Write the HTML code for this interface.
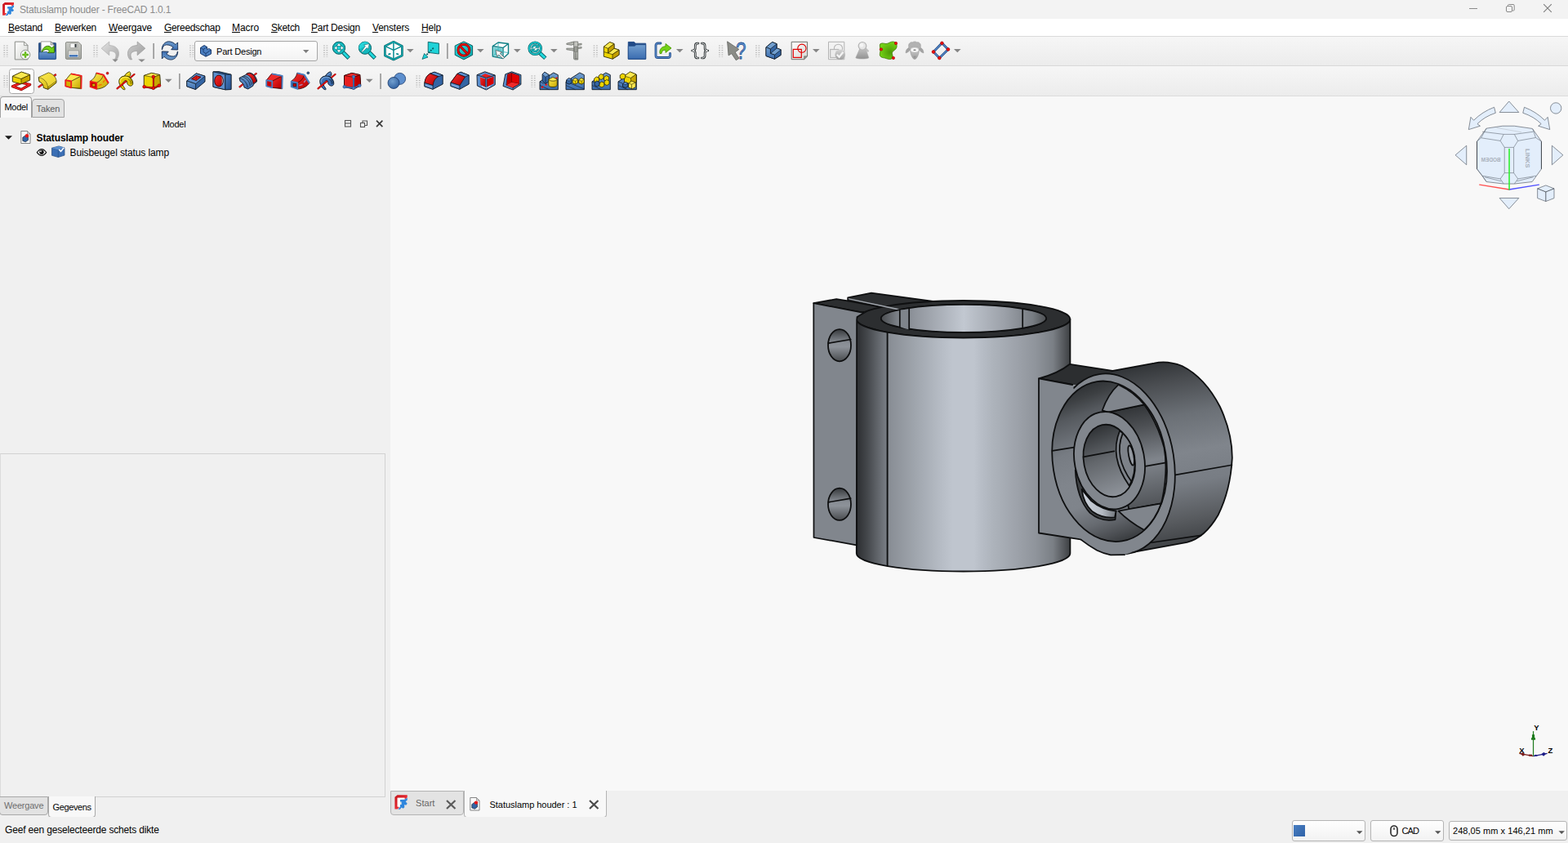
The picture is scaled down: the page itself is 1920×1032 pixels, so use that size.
<!DOCTYPE html>
<html lang="nl">
<head>
<meta charset="utf-8">
<title>Statuslamp houder - FreeCAD 1.0.1</title>
<style>
*{box-sizing:border-box;margin:0;padding:0}
html,body{width:1920px;height:1032px;overflow:hidden;background:#f0f0f0;font-family:"Liberation Sans","DejaVu Sans",sans-serif;font-size:12px;color:#000}
.abs{position:absolute}
#titlebar{position:absolute;left:0;top:0;width:1920px;height:23px;background:#f3f3f3}
#title{position:absolute;left:24px;top:5px;font-size:12px;color:#8b8b8b;white-space:nowrap;line-height:15px;letter-spacing:-0.19px}
#menubar{position:absolute;left:0;top:23px;width:1920px;height:21px;background:#fff}
.mi{position:absolute;top:4px;line-height:14px;font-size:12px;white-space:nowrap;color:#000;letter-spacing:-0.25px}
.mi u{text-decoration:underline;text-underline-offset:1px}
#tb1{position:absolute;left:0;top:44px;width:1920px;height:37px;background:linear-gradient(#f6f6f6,#ececec);border-top:1px solid #dadada;border-bottom:1px solid #d8d8d8}
#tb2{position:absolute;left:0;top:81px;width:1920px;height:37px;background:linear-gradient(#f6f6f6,#ececec);border-bottom:1px solid #dcdcdc}
#left{position:absolute;left:0;top:118px;width:478px;height:882px;background:#f0f0f0}
#view{position:absolute;left:478px;top:118px;width:1442px;height:850px;background:#f8f8f8;overflow:hidden}
#viewtabs{position:absolute;left:478px;top:968px;width:1442px;height:32px;background:#f0f0f0}
#status{position:absolute;left:0;top:1000px;width:1920px;height:32px;background:#f0f0f0}
#status .msg{position:absolute;left:6px;top:9px;font-size:12px;line-height:14px;white-space:nowrap;letter-spacing:-0.173px}
#combo{position:absolute;left:238px;top:50px;width:151px;height:25px;border:1px solid #a6a6a6;border-radius:3px;background:linear-gradient(#fefefe,#f3f3f3)}
#combo span{position:absolute;left:26px;top:5px;font-size:11px;line-height:14px;letter-spacing:-0.2px;white-space:nowrap}
</style>
</head>
<body>
<svg width="0" height="0" style="position:absolute">
<defs>
<linearGradient id="gY" x1="0" y1="0" x2="1" y2="1"><stop offset="0" stop-color="#fce94f"/><stop offset="1" stop-color="#c9a800"/></linearGradient>
<linearGradient id="gYv" x1="0" y1="0" x2="0" y2="1"><stop offset="0" stop-color="#fce94f"/><stop offset="1" stop-color="#d4b200"/></linearGradient>
<linearGradient id="gB" x1="0" y1="0" x2="0" y2="1"><stop offset="0" stop-color="#729fcf"/><stop offset="1" stop-color="#3a6cb0"/></linearGradient>
<linearGradient id="gBd" x1="0" y1="0" x2="1" y2="1"><stop offset="0" stop-color="#4a7fc1"/><stop offset="1" stop-color="#25508f"/></linearGradient>
<linearGradient id="gR" x1="0" y1="0" x2="1" y2="1"><stop offset="0" stop-color="#f22c2c"/><stop offset="1" stop-color="#b80000"/></linearGradient>
<linearGradient id="gT" x1="0" y1="0" x2="1" y2="1"><stop offset="0" stop-color="#2fe2e6"/><stop offset="1" stop-color="#0aa3a8"/></linearGradient>
<linearGradient id="gPage" x1="0" y1="0" x2="1" y2="1"><stop offset="0" stop-color="#ffffff"/><stop offset="1" stop-color="#d6d7d3"/></linearGradient>
<linearGradient id="gGrey" x1="0" y1="0" x2="0" y2="1"><stop offset="0" stop-color="#c9cac5"/><stop offset="1" stop-color="#a3a59f"/></linearGradient>
<linearGradient id="gUndo" x1="0" y1="0" x2="1" y2="1"><stop offset="0" stop-color="#e4e4e4"/><stop offset="1" stop-color="#a8a8a8"/></linearGradient>
<linearGradient id="gRedo" x1="1" y1="0" x2="0" y2="1"><stop offset="0" stop-color="#cfcfcf"/><stop offset="1" stop-color="#9a9a9a"/></linearGradient>
<linearGradient id="gDis" x1="0" y1="0" x2="0" y2="1"><stop offset="0" stop-color="#d6d6d6"/><stop offset="1" stop-color="#9c9c9c"/></linearGradient>
<linearGradient id="gDis2" x1="0" y1="0" x2="0" y2="1"><stop offset="0" stop-color="#c6c6c6"/><stop offset="1" stop-color="#929292"/></linearGradient>
<radialGradient id="gGreen" cx=".6" cy=".6" r=".6"><stop offset="0" stop-color="#4e9a06"/><stop offset="1" stop-color="#73d216"/></radialGradient>
<radialGradient id="gSph" cx=".4" cy=".35" r=".7"><stop offset="0" stop-color="#729fcf"/><stop offset="1" stop-color="#2f5f9f"/></radialGradient>
<linearGradient id="gLogo" x1="0" y1="0" x2="1" y2="1"><stop offset="0" stop-color="#c4141b"/><stop offset=".45" stop-color="#e0262d"/><stop offset="1" stop-color="#ff5f64"/></linearGradient>
</defs>
</svg>
<div id="titlebar">
  <svg class="abs" style="left:0;top:0" width="24" height="24" viewBox="0 0 768 768"><path d="M100 170L190 95H545V185L450 258V195H195V510L268 515 200 600H100z" fill="url(#gLogo)"/><path d="M195 195H450V258H290V520L195 512z" fill="#fff"/><path d="M290 262L450 256 545 190V275L485 330 545 400 500 455 440 440 445 530 400 575 335 540 290 605H215L290 515V440H340V335H290z" fill="#2f86dd"/></svg>
  <div id="title">Statuslamp houder - FreeCAD 1.0.1</div>
  <svg class="abs" style="left:1780px;top:0" width="140" height="23" viewBox="1780 0 140 23"><path d="M1799 10.5h10" stroke="#8a8a8a" stroke-width="1"/><rect x="1844.5" y="7.5" width="7" height="7" rx="1.5" fill="none" stroke="#8a8a8a"/><path d="M1846.5 7.5v-1a1 1 0 0 1 1-1h5.5a1.2 1.2 0 0 1 1.2 1.2v5.3a1 1 0 0 1-1 1h-1" fill="none" stroke="#8a8a8a"/><path d="M1890.200 5.200l9.600 9.600M1899.800 5.200l-9.600 9.600" stroke="#7c7c7c" stroke-width="1.100"/></svg>
</div>
<div id="menubar">
  <span class="mi" style="left:10px;letter-spacing:-0.29px"><u>B</u>estand</span>
  <span class="mi" style="left:67px;letter-spacing:-0.3px"><u>B</u>ewerken</span>
  <span class="mi" style="left:133px;letter-spacing:-0.19px"><u>W</u>eergave</span>
  <span class="mi" style="left:201px;letter-spacing:-0.32px"><u>G</u>ereedschap</span>
  <span class="mi" style="left:284px;letter-spacing:-0.07px"><u>M</u>acro</span>
  <span class="mi" style="left:332px;letter-spacing:-0.28px"><u>S</u>ketch</span>
  <span class="mi" style="left:381px;letter-spacing:-0.25px"><u>P</u>art Design</span>
  <span class="mi" style="left:456px;letter-spacing:-0.21px"><u>V</u>ensters</span>
  <span class="mi" style="left:516px;letter-spacing:-0.17px"><u>H</u>elp</span>
</div>
<div id="tb1"></div>
<div id="tb2"></div>
<div id="combo"><svg class="abs" style="left:5px;top:3px" width="16" height="16" viewBox="0 0 16 16"><path d="M1.5 4.5L6 1.5l3.5 2v3.2l2.2-1.3L14.5 7v5L8 15.2 1.5 11.5z" fill="#4a7fc1" stroke="#1b3a6b" stroke-width="1"/><path d="M1.5 4.5L5 6.5v3.2l3 1.8v3.7M5 6.5l4.5-3M8 11.5l6.5-4.5" fill="none" stroke="#1b3a6b" stroke-width=".9"/></svg><span>Part Design</span><svg class="abs" style="left:132px;top:9.5px" width="8" height="5" viewBox="0 0 8 5"><path d="M0 0h7.4L3.7 4z" fill="#7d7d7d"/></svg></div>
<svg class="abs" style="left:0;top:44px" width="1920" height="74" viewBox="0 44 1920 74" font-family="Liberation Sans, sans-serif">
<!-- grips tb1 -->
<path d="M5.3 55.400V70M8.7 55.400V70M115.3 55.400V70M118.7 55.400V70M233 55.400V70M236.4 55.400V70M397 55.400V70M400.4 55.400V70M727.5 55.400V70M730.9 55.400V70M881 55.400V70M884.4 55.400V70M926 55.400V70M929.4 55.400V70M5.3 92.400V107M8.7 92.400V107M510.3 92.400V107M513.7 92.400V107M651.3 92.400V107M654.7 92.400V107" stroke="#b0b0b0" stroke-width="1.700" stroke-dasharray="1 1.800" fill="none"/>
<!-- separators -->
<g fill="#9b9b9b"><rect x="187.3" y="53" width="1.7" height="19"/><rect x="547" y="53" width="1.7" height="19"/><rect x="219" y="90" width="1.7" height="19"/><rect x="465.2" y="90" width="1.7" height="19"/></g>
<!-- dropdown arrows -->
<g fill="#858585">
<path d="M498 60h8.6l-4.3 4.3z"/><path d="M584 60h8.6l-4.3 4.3z"/><path d="M629 60h8.6l-4.3 4.3z"/><path d="M674 60h8.6l-4.3 4.3z"/><path d="M828 60h8.6l-4.3 4.3z"/><path d="M995 60h8.6l-4.3 4.3z"/><path d="M1168 60h8.6l-4.3 4.3z"/>
<path d="M202 96.7h8.6l-4.3 4.3z"/><path d="M448 96.7h8.6l-4.3 4.3z"/>
</g>
<!-- New -->
<g transform="translate(16,50)"><path d="M2.3 1.1h11.2l4.5 4.5v17.3H2.3z" fill="url(#gPage)" stroke="#888a85"/><path d="M13.5 1.1v4.5h4.5z" fill="#f4f4f2" stroke="#888a85" stroke-width=".8" stroke-linejoin="round"/><circle cx="15.1" cy="17" r="5.7" fill="#fdfdfd" stroke="#888a85" stroke-width=".9"/><path d="M15.1 13.2v7.6M11.3 17h7.6" stroke="#4e9a06" stroke-width="2.3"/><path d="M15.1 13.8v6.4M11.9 17h6.4" stroke="#8ae234" stroke-width=".9"/></g>
<!-- Open -->
<g transform="translate(46,50)"><path d="M2.400 2.400H21.600a1 1 0 0 1 1 1V21.600a1 1 0 0 1-1 1H2.400a1 1 0 0 1-1-1V3.400a1 1 0 0 1 1-1z" fill="#204a87" stroke="#1a3a6a" stroke-width=".6"/><path d="M4.200.900h12l3.900 3.950V16H4.200z" fill="#fdfdfd" stroke="#8a8c88" stroke-width=".8"/><path d="M16.200.900v3.950h3.900z" fill="#e4e4e2" stroke="#6f716d" stroke-width=".7" stroke-linejoin="round"/><path d="M1.600 13.900L11.500 13.300 12.700 15 20 14.800 22.400 11.800V21.600a.8.800 0 0 1-.8.800H2.400a.8.800 0 0 1-.8-.8z" fill="url(#gB)" stroke="#204a87" stroke-width=".7" stroke-linejoin="round"/><path d="M5.100 13.600C6 9.500 9 6.400 12.700 6.300 14.600 6.400 16 7.400 17.300 8.600L20.300 6.600 20.500 14.400 12.400 14.400 14.400 12.400C13.200 11 11.600 10.300 10.100 10.400 8.200 10.800 6.800 12 5.700 13.600z" fill="#73d216" stroke="#2f6a04" stroke-width=".9" stroke-linejoin="round"/></g>
<!-- Save -->
<g transform="translate(78,50)"><path d="M3.8 1.6h14.3l3.4 3.4v16a1.4 1.4 0 0 1-1.4 1.4H3.8a1.4 1.4 0 0 1-1.4-1.4V3a1.4 1.4 0 0 1 1.4-1.4z" fill="url(#gGrey)" stroke="#888a85"/><rect x="8" y="3.1" width="8.8" height="5.6" rx=".9" fill="#fbfbfb" stroke="#888a85" stroke-width=".7"/><rect x="13.5" y="3.9" width="2.1" height="4" fill="#2e3436"/><rect x="5.8" y="12" width="12.5" height="8.4" fill="#eeeeec" stroke="#888a85" stroke-width=".7"/><path d="M6.5 14h11M6.5 15.7h11" stroke="#bcbcb8" stroke-width=".8"/><rect x="6.8" y="17.1" width="10.5" height="2.5" fill="#3f73b8"/></g>
<!-- Undo -->
<g transform="translate(123,50)"><path d="M1.2 9.2L10.8 1v4.6c7 0 11.7 4 11.7 10 0 3-1 5.4-2.6 7.2h-2.6c1.200-1.800 1.700-3.400 1.700-5 0-3.600-3-5.400-8.200-5.400v5.300z" fill="url(#gUndo)" stroke="#b4b4b4" stroke-width=".8" stroke-linejoin="round"/><path d="M14.4 22.4h7.300l-3.650 3.600z" fill="#8a8a8a"/></g>
<!-- Redo -->
<g transform="translate(155,50)"><path transform="translate(24,0) scale(-1,1)" d="M1.2 9.2L10.8 1v4.6c7 0 11.7 4 11.7 10 0 3-1 5.400-2.600 7.200h-2.600c1.200-1.800 1.700-3.400 1.700-5 0-3.600-3-5.400-8.200-5.400v5.300z" fill="url(#gRedo)" stroke="#a0a0a0" stroke-width=".8" stroke-linejoin="round"/><path d="M14.200 22.400h8.600l-4.300 3.700z" fill="#8a8a8a"/></g>
<!-- Refresh -->
<g transform="translate(195,50)"><path d="M3.250 10.700C3.300 5 7 1 11.500.800 15 .800 17.800 2.400 20 4.600L22.600 1.900 22.700 10.950 14.700 10.700 17.100 8C15 6 12 4.850 8.600 4.850 5.800 5.200 4 7.500 3.700 10.600z" fill="url(#gB)" stroke="#13294d" stroke-width=".9" stroke-linejoin="round"/><path transform="rotate(180 12.980 11.950)" d="M3.250 10.700C3.300 5 7 1 11.500.800 15 .800 17.800 2.400 20 4.600L22.600 1.900 22.700 10.950 14.700 10.700 17.100 8C15 6 12 4.850 8.600 4.850 5.800 5.200 4 7.500 3.700 10.600z" fill="url(#gB)" stroke="#13294d" stroke-width=".9" stroke-linejoin="round"/></g>
<!-- ZoomFit -->
<g transform="translate(405,50)"><path d="M15 14l7.200 7.200" stroke="#0b5f63" stroke-width="4.800"/><path d="M14.500 13.500l7.200 7.200" stroke="#22d9de" stroke-width="3"/><circle cx="10" cy="8.700" r="7.600" fill="#13b9bf" stroke="#0b5f63"/><path d="M10 2.800l2.900 3.700H7.100zM10 14.600l2.900-3.700H7.100zM4.100 8.700l3.700-2.900v5.800zM15.900 8.700l-3.700-2.900v5.800z" fill="#fff" stroke="#0b5f63" stroke-width=".5"/><rect x="8.200" y="6.900" width="3.600" height="3.600" fill="#25dbe0" stroke="#0b8f94" stroke-width=".5"/></g>
<!-- ZoomSel -->
<g transform="translate(437,50)"><path d="M15 14l7.200 7.200" stroke="#0b5f63" stroke-width="4.800"/><path d="M14.500 13.500l7.200 7.200" stroke="#22d9de" stroke-width="3"/><circle cx="9.900" cy="8.700" r="7.600" fill="#13b9bf" stroke="#0b5f63"/><path d="M2.600 10.500A7.600 7.600 0 0 1 15.400 3.400z" fill="#2fe0e4" opacity=".7"/><path d="M5.600 13.100l1 1 5.600-5.600 1.700 1.700 1.300-6.600-6.600 1.300 1.700 1.700z" fill="#fff" stroke="#0b5f63" stroke-width=".6" stroke-linejoin="round"/></g>
<!-- Iso cube -->
<g transform="translate(470,50)"><path d="M11.900 1.200L22.400 6.400v11.600L11.900 23 1.400 18V6.400z" fill="#fff" stroke="#0b5f63" stroke-width="2.600" stroke-linejoin="round"/><path d="M11.900 1.200L22.400 6.400v11.600L11.900 23 1.400 18V6.400zM1.400 6.400l10.500 5 10.500-5M11.900 11.400V23M11.900 1.200v10" fill="none" stroke="#11a9af" stroke-width="1.400" stroke-linejoin="round"/><path d="M1.400 6.400l10.500 5 10.500-5M11.900 11.400V23M11.900 2v9" fill="none" stroke="#0b6a6f" stroke-width=".6"/><ellipse cx="6.900" cy="16.200" rx="1.800" ry="1" fill="#0b8d92" transform="rotate(-15 6.900 16.200)"/><ellipse cx="16.700" cy="16.200" rx="1.800" ry="1" fill="#0b8d92" transform="rotate(15 16.700 16.200)"/></g>
<!-- SelFit -->
<g transform="translate(516,50)"><path d="M8.200 1.300l13.200 1.800v12.900L8.200 14.300z" fill="#1fd3d8" stroke="#0b5f63" stroke-width=".9" stroke-linejoin="round"/><path d="M14.800 8.700L5.500 18" stroke="#0b5f63" stroke-width="1.800" stroke-dasharray="2 1.300"/><path d="M1 22.400l2.600-6.900 4.400 4.500z" fill="#1fd3d8" stroke="#0b5f63" stroke-width=".8" stroke-linejoin="round"/></g>
<!-- DrawStyle -->
<g transform="translate(555,50)"><path d="M12.900.9L23.600 6v11.300L12.900 22.900 2.200 17.300V6z" fill="url(#gT)" stroke="#0b5f63" stroke-linejoin="round"/><circle cx="12.900" cy="11.200" r="7" fill="none" stroke="#7a0000" stroke-width="3"/><circle cx="12.900" cy="11.200" r="7" fill="none" stroke="#e01010" stroke-width="2"/><path d="M8 6.300l9.800 9.800" stroke="#7a0000" stroke-width="3"/><path d="M8 6.300l9.800 9.800" stroke="#e01010" stroke-width="2"/></g>
<!-- SelBox -->
<g transform="translate(601,50)"><path d="M2.300 6.500L9 2l12.500 1.500v12L15 21.600 2.300 19z" fill="#fff" fill-opacity=".7" stroke="#0e7f85" stroke-width="1.400" stroke-linejoin="round"/><path d="M2.300 6.500L15 8.500v13M15 8.500l6.500-5" fill="none" stroke="#0e7f85" stroke-width="1.400"/><path d="M3.500 8l10.300 1.600v10.500L3.500 18z" fill="#3fbfc4" opacity=".8"/><path d="M9 2.500v10l-6 6M9 12.500l12 2" fill="none" stroke="#38b5ba" stroke-width=".9"/><path d="M6 11.500l1.800 8 1.800-2.600 5.400 5 1.500-1.500-5.300-5 2.800-1.400z" fill="#fff" stroke="#555" stroke-width=".7" stroke-linejoin="round"/></g>
<!-- ZoomRef -->
<g transform="translate(645,50)"><path d="M15.500 14.500l7.300 6.800" stroke="#0b5f63" stroke-width="4.800"/><path d="M15 14l7.300 6.800" stroke="#22d9de" stroke-width="3"/><circle cx="10.200" cy="9.200" r="7.300" fill="#eafafa" stroke="#0b5f63" stroke-width="3"/><circle cx="10.200" cy="9.200" r="7.300" fill="none" stroke="#19c4ca" stroke-width="1.800"/><path d="M5.500 8.500c.3-2.600 2.200-4.200 4.700-4.200 1.300 0 2.300.4 3.100 1.100l1.500-1.300v4.500h-4.500l1.500-1.500c-.5-.4-1-.6-1.700-.6-1.300 0-2.200.8-2.500 2z" fill="#12aeb4" stroke="#0b6a6f" stroke-width=".5"/><path transform="rotate(180 10.200 9.200)" d="M5.500 8.500c.3-2.600 2.200-4.200 4.700-4.200 1.300 0 2.300.4 3.100 1.100l1.500-1.300v4.500h-4.500l1.500-1.500c-.5-.4-1-.6-1.700-.6-1.300 0-2.200.8-2.500 2z" fill="#12aeb4" stroke="#0b6a6f" stroke-width=".5"/></g>
<!-- Measure -->
<g transform="translate(691,50)"><path d="M11.600 1h5.100v22h-4.200l-.9-1z" fill="url(#gGrey)" stroke="#6f716c" stroke-width=".8"/><path d="M2.800 3.200L11.600 1v3.300l-3 .9-5.800-.9zM2.800 9.200h8.800v3.100l-3-.7-5.800-.9z" fill="#b4b6b0" stroke="#6f716c" stroke-width=".8" stroke-linejoin="round"/><path d="M16.700 3.800l4.400-.6v1.700l-4.400.6zM16.700 8l4.400-.6v1.700l-4.400.6z" fill="#b4b6b0" stroke="#6f716c" stroke-width=".7"/><path d="M12.500 7h3.300v6.500h-3.300z" fill="#9b9d97" stroke="#6f716c" stroke-width=".6"/><path d="M13 15h1.600M13 16.700h1.600M13 18.400h1.600M13 20.100h1.600M13 21.600h2.600" stroke="#555" stroke-width=".6"/></g>
<!-- Part -->
<g transform="translate(735,50)"><path d="M4.300 7.200L11.600 1.600l5.400 2v5.600l6 2v6L15 22.200 4.300 19.200z" fill="#edd400" stroke="#302b00" stroke-width=".9" stroke-linejoin="round"/><path d="M4.300 7.200L11.600 1.600l5.400 2-7.300 5.700z" fill="#fce94f" stroke="#302b00" stroke-width=".7" stroke-linejoin="round"/><path d="M9.700 9.300V15l5.300 1.700 8-5.500-6-2-7.300 5.800" fill="#fce94f" stroke="#302b00" stroke-width=".7" stroke-linejoin="round"/><path d="M15 16.700v5.500l8-5v-6z" fill="#c4a000" stroke="#302b00" stroke-width=".7" stroke-linejoin="round"/><path d="M9.700 9.300l7.300-5.700v5.600L9.700 15z" fill="#c4a000" stroke="#302b00" stroke-width=".7" stroke-linejoin="round"/><path d="M4.300 13.500l5.400 1.500" stroke="#302b00" stroke-width=".7"/></g>
<!-- Group -->
<g transform="translate(768,50)"><path d="M1.300 1.400h7.200l1.500 1.800h12.700v19H1.300z" fill="#204a87" stroke="#204a87" stroke-linejoin="round"/><path d="M1.300 6.300h8l1.500-1.600h11.900v17.500H1.300z" fill="url(#gB)" stroke="#204a87" stroke-width=".8" stroke-linejoin="round"/></g>
<!-- Link -->
<g transform="translate(800,50)"><path d="M9 3H5.500A2.500 2.500 0 0 0 3 5.500v12.500A2.500 2.500 0 0 0 5.500 20.500h12.500a2.500 2.500 0 0 0 2.500-2.500V15.500" fill="none" stroke="#204a87" stroke-width="2.800" stroke-linecap="round"/><path d="M9 3H5.500A2.500 2.500 0 0 0 3 5.500v12.500A2.500 2.500 0 0 0 5.500 20.500h12.500a2.500 2.500 0 0 0 2.500-2.500V15.500" fill="none" stroke="#5d8fce" stroke-width="1.200" stroke-linecap="round"/><path d="M8 15.500c-.8-5 2-8.500 7-8.800V3.500l7 5.400-7 5.500v-3.200c-3-.2-4.500 1.200-5 4.300z" fill="#73d216" stroke="#4e9a06" stroke-width=".9" stroke-linejoin="round"/></g>
<!-- Braces -->
<g transform="translate(845,50)" fill="none" stroke-linecap="round" stroke-linejoin="round"><path d="M10 3.100H9Q6.300 3.100 6.300 6V9.300Q6.300 12 2.600 12 6.300 12 6.300 14.700V18.200Q6.300 21 9 21H10M14.400 3.100H15.400Q18.100 3.100 18.100 6V9.300Q18.100 12 21.800 12 18.100 12 18.100 14.700V18.200Q18.100 21 15.400 21H14.400" stroke="#2e3436" stroke-width="2.700"/><path d="M10 3.100H9Q6.300 3.100 6.300 6V9.300Q6.300 12 2.600 12 6.300 12 6.300 14.700V18.200Q6.300 21 9 21H10M14.400 3.100H15.400Q18.100 3.100 18.100 6V9.300Q18.100 12 21.800 12 18.100 12 18.100 14.700V18.200Q18.100 21 15.400 21H14.400" stroke="#f0f0f0" stroke-width=".9"/></g>
<!-- WhatsThis -->
<g transform="translate(890,50)"><text x="17.300" y="21.600" font-size="30" text-anchor="middle" fill="#5b8fd0" stroke="#204a87" stroke-width=".8" textLength="12.500" lengthAdjust="spacingAndGlyphs">?</text><path d="M.6.800L2.100 17.900 5.800 15.600 11.250 23.700 15 21.400 10.200 13.900 14.800 10.400z" fill="#8a8c87" stroke="#5f615d" stroke-width=".8" stroke-linejoin="round"/></g>
<!-- Body -->
<g transform="translate(935,50)"><path d="M3 7.800L10.600 1.500l5.600 2.200v5.300l5 1.800v6.700L13.600 22.300 3 18.500z" fill="#3465a4" stroke="#0b1521" stroke-linejoin="round"/><path d="M3 7.800L10.600 1.500l5.600 2.200-7.800 6.300z" fill="#729fcf" stroke="#0b1521" stroke-width=".7" stroke-linejoin="round"/><path d="M8.400 10v5.500l5.200 1.700 7.600-6.400-5-1.800-7.800 6.500" fill="#729fcf" stroke="#0b1521" stroke-width=".7" stroke-linejoin="round"/><path d="M3 7.800l5.400 2.200v5.500l5.200 1.700v5.100L3 18.500z" fill="url(#gB)" stroke="#0b1521" stroke-width=".7" stroke-linejoin="round"/></g>
<!-- Sketch -->
<g transform="translate(967,50)"><path d="M2.200 1.300h19.400v17.500l-4 3.900H2.200z" fill="url(#gPage)" stroke="#6f716c"/><path d="M17.600 22.700v-3.900h4z" fill="#8e908b" stroke="#6f716c" stroke-width=".6"/><circle cx="14.900" cy="9.200" r="5.100" fill="none" stroke="#e00000" stroke-width="1.100"/><rect x="4.300" y="10.400" width="10" height="10" fill="none" stroke="#e00000" stroke-width="1.200"/></g>
<!-- EditSketch disabled -->
<g transform="translate(1013,50)" opacity=".95"><path d="M1.500 1.300h19.300v21.400H1.500z" fill="#f2f2f2" stroke="#b0b0b0"/><circle cx="13.500" cy="9.300" r="5.100" fill="none" stroke="#b4b4b4" stroke-width="1.100"/><rect x="3.700" y="10.500" width="10" height="10" fill="#ececec" stroke="#b4b4b4" stroke-width="1.200"/><circle cx="15.700" cy="16.700" r="6.300" fill="url(#gDis)"/><path d="M11.800 16.800l2.800 3 4.800-6" fill="none" stroke="#f4f4f4" stroke-width="2.200"/></g>
<!-- Pawn disabled -->
<g transform="translate(1044,50)"><path d="M9.300 8.500L3.800 20.800c1.500 1.600 14.500 1.600 16 0L15.600 8.500z" fill="url(#gDis2)" stroke="#a6a6a6" stroke-width=".6"/><path d="M14.800 8.200l4 4.300" stroke="#bdbdbd" stroke-width="2.300" stroke-linecap="round"/><circle cx="12" cy="6.300" r="4.800" fill="#e6e6e6" stroke="#b4b4b4" stroke-width="1.200"/><circle cx="11" cy="5.300" r="2.400" fill="#f4f4f4"/></g>
<!-- Validate -->
<g transform="translate(1076,50)"><path d="M2 3.600c3-2 6 1 9-.4 3-1.400 5.500-3.200 9-1.500 2 1 2.300 3.500 2 6-.3 3-4.500 4-5.500 6.500-.8 2 1.800 4.500 0 7-1.500 2-4.500 1.300-7 .5C7 20.500 3 21 1.700 18.500c-1-2 .3-4.500.3-7 0-3-1.500-6.500 0-7.900z" fill="url(#gGreen)" stroke="#3d7a05" stroke-width=".8"/><g fill="#ef1010" stroke="#a40000" stroke-width=".6"><circle cx="21" cy="3" r="1.700"/><circle cx="2.900" cy="10.400" r="1.700"/><circle cx="17.900" cy="21" r="1.700"/></g></g>
<!-- Sheep disabled -->
<g transform="translate(1108,50)"><path d="M5.300 8.500C2.500 9 1.300 11.500 1 14.800c2.300-.3 4.200-1.800 5.300-4zM18.700 8.500c2.800.5 4 3 4.300 6.300-2.300-.3-4.200-1.800-5.300-4z" fill="#a4a4a4" stroke="#8c8c8c" stroke-width=".5"/><path d="M4.800 7C3.800 3.500 7 1 9.500 1.800 11 .6 13 .6 14.500 1.800 17 1 20.200 3.500 19.200 7c.5 2-.5 3.500-2 4H6.800c-1.500-.500-2.500-2-2-4z" fill="#b2b2b2" stroke="#9a9a9a" stroke-width=".6"/><path d="M6.500 9C6.300 14 8 19.500 10.300 21.800c1 .9 2.400.9 3.400 0C16 19.500 17.700 14 17.500 9 15 6.800 9 6.800 6.500 9z" fill="url(#gDis)" stroke="#9a9a9a" stroke-width=".6"/><ellipse cx="12" cy="11.200" rx="4.600" ry="2.500" fill="#f8f8f8"/><rect x="10.400" y="10.600" width="3.200" height="1.300" rx=".6" fill="#7d7d7d"/><path d="M10.600 19.200h2.800M12 19.200v1.700" stroke="#8a8a8a" stroke-width=".7"/></g>
<!-- Datum -->
<g transform="translate(1140,50)"><path d="M13.400 2.800l7.600 7.600L10.300 21 3 13.500z" fill="none" stroke="#204a87" stroke-width="2.800" stroke-linejoin="round"/><path d="M13.400 2.800l7.600 7.600L10.300 21 3 13.500z" fill="none" stroke="#5d8fce" stroke-width="1.200" stroke-linejoin="round"/><g fill="#ef1010" stroke="#a40000" stroke-width=".6"><circle cx="13.400" cy="2.800" r="1.900"/><circle cx="21" cy="10.400" r="1.900"/><circle cx="10.300" cy="21" r="1.900"/><circle cx="3" cy="13.500" r="1.900"/></g></g>
<!-- Pad hover frame -->
<rect x="11.500" y="84.500" width="30" height="30" rx="3" fill="#fff" stroke="#a9a9a9"/>
<!-- Pad -->
<g transform="translate(14,87)"><path d="M12.200 14.300l10.600 2.200L12 22.600 1.400 18.700z" fill="#fff" stroke="#7a0000" stroke-width="3.200" stroke-linejoin="round"/><path d="M12.200 14.300l10.600 2.200L12 22.600 1.400 18.700z" fill="none" stroke="#ef2020" stroke-width="2" stroke-linejoin="round"/><path d="M1.300 6.400L12.250 1.100 22.600 4.600v6.500L12 15.800 1.300 13z" fill="#edd400" stroke="#302b00" stroke-width=".9" stroke-linejoin="round"/><path d="M1.300 6.400L12.250 1.100 22.600 4.600 12 9.600z" fill="#fce94f" stroke="#302b00" stroke-width=".7" stroke-linejoin="round"/><path d="M12 9.600l10.600-5v6.500L12 15.800z" fill="#c9a800" stroke="#302b00" stroke-width=".7" stroke-linejoin="round"/></g>
<!-- Revolution -->
<g transform="translate(46,87)"><path d="M.9 19.900L22.750 4" stroke="#7a0000" stroke-width="2.400"/><path d="M.9 19.900L22.750 4" stroke="#ef2020" stroke-width="1.500"/><path d="M1.200 7.700L13.400 2C19 3.500 22.500 7.500 23 12l-.2 2.500-10 7.900-5.600-2C7.500 17 5 14 2 13z" fill="url(#gY)" stroke="#302b00" stroke-width=".9" stroke-linejoin="round"/><path d="M1.200 7.700C7 8.500 12 13 12.800 19.500v2.900M12.800 19.500L22.800 12" fill="none" stroke="#302b00" stroke-width=".7"/><path d="M1.200 7.700L13.400 2C19 3.500 22.500 7.500 23 12l-10.200 7.500C12 13 7 8.500 1.200 7.700z" fill="#fce94f" opacity=".55"/></g>
<!-- Loft -->
<g transform="translate(78,87)"><path d="M2.300 11.100L8.900 3.300l12.800 2.500-.3 15.950L9.200 20.300 2.300 18.500z" fill="#edd400" stroke="#302b00" stroke-width=".7" stroke-linejoin="round"/><path d="M2.300 11.100L8.900 3.300l12.800 2.500L9.200 12.500z" fill="#fce94f" stroke="#302b00" stroke-width=".6"/><path d="M9.200 12.500L20.500 6.600v14.300L9.200 20.300z" fill="url(#gY)" stroke="#302b00" stroke-width=".6"/><path d="M8.900 3.300l12.800 2.500-.3 15.950" fill="none" stroke="#ef2020" stroke-width="1.800" stroke-linejoin="round"/><path d="M2.300 11.100l6.900 1.400v7.800l-6.900-1.800z" fill="#d4b000" stroke="#ef2020" stroke-width="1.800" stroke-linejoin="round"/></g>
<!-- Sweep -->
<g transform="translate(110,87)"><path d="M.5 12.400C4.500 10 7 6.500 7.800 2.400l8.800 2.200 6.200 10c-3 4.500-8 7-14.400 7.400z" fill="url(#gY)" stroke="#302b00" stroke-width=".8" stroke-linejoin="round"/><path d="M8.400 14.250C12.500 12.500 15.500 9 16.600 4.600" fill="none" stroke="#302b00" stroke-width=".7"/><path d="M11 17.500l3-1M16.500 13.500l1.500-2" stroke="#f57900" stroke-width="1.600" stroke-linecap="round"/><path d="M7.800 2.400l8.800 2.200 6.200 10" fill="none" stroke="#ef2020" stroke-width="2" stroke-linejoin="round"/><path d="M.5 12.400l7.900 1.850V22L.5 19.250z" fill="#d00" stroke="#ef2020" stroke-width="1.500" stroke-linejoin="round"/><rect x="3" y="15.300" width="3.600" height="3.600" fill="#d4b000" stroke="#7a0000" stroke-width=".5"/><circle cx="21.600" cy="2.700" r="1.400" fill="#ef1010" stroke="#7a0000" stroke-width=".6"/></g>
<!-- Helix -->
<g transform="translate(142,87)"><path d="M22.500 4L12 12.700" stroke="#7a0000" stroke-width="2.100" stroke-linecap="round"/><path d="M22.500 4L12 12.700" stroke="#e81212" stroke-width="1.400" stroke-linecap="round"/><path d="M10.300 6.400C11.500 3.600 14 1.400 16.600.800c1.200.700 1.600 2.700 1.100 4.500-.6 1.300-1.800 2-3.200 2.300z" fill="#e2c800" stroke="#302b00" stroke-width=".9" stroke-linejoin="round"/><path d="M12.500 5.800c1.200-1.800 2.700-3 4-3.600" fill="none" stroke="#fce94f" stroke-width="1.200" stroke-linecap="round"/><path d="M3.800 13.800C3.300 10.500 5 7.800 8 6.600c3.500-1.300 7.500-.5 10 2 2 2 3 4.800 2.700 7.200-.4 1.600-1.700 2.500-3.300 2.300-1.700-.3-3-1.300-3.600-2.800.2-1.300 0-2.300-.6-3-.8-.9-2-.9-3 0-1.200 1-2 2.600-2 4.400.3 1.200.9 2.300 1.800 3.300 1 1.200 1.500 2.300.5 2.900-1.700-.3-3.500-1.800-4.800-4-1-1.600-1.700-3.400-1.900-5.100z" fill="#e2c800" stroke="#302b00" stroke-width=".9" stroke-linejoin="round"/><path d="M5.300 13.500c-.2-2.700 1.300-4.800 3.600-5.600 2.800-.9 5.800-.2 7.700 1.700" fill="none" stroke="#fce94f" stroke-width="1.300" stroke-linecap="round"/><path d="M14.500 9.200c2.300 1.500 3.800 4 3.600 6.800M16.300 8.800c2.200 1.700 3.300 4.200 3.100 6.700" fill="none" stroke="#5a5000" stroke-width=".7"/><path d="M1.500 21.400L12.300 12.500" stroke="#7a0000" stroke-width="2.100" stroke-linecap="round"/><path d="M1.500 21.400L12.300 12.500" stroke="#e81212" stroke-width="1.400" stroke-linecap="round"/></g>
<!-- Primitive -->
<g transform="translate(174,87)"><path d="M2.250 5.500L11.600 2.400l10 2.200.9 13.100-8.700 4.300L2.250 19.500z" fill="#edd400" stroke="#302b00" stroke-width=".9" stroke-linejoin="round"/><path d="M2.250 5.500L11.600 2.400l10 2.200-7.800 2.900z" fill="#fce94f" stroke="#302b00" stroke-width=".6"/><path d="M13.800 7.500l7.800-2.900.9 13.100-8.700 4.300z" fill="#c9a800" stroke="#302b00" stroke-width=".6"/><path d="M13.800 7v13.800M2.600 19.250l11.200 1.550 7.200-3.100" fill="none" stroke="#7a0000" stroke-width="1.900"/><path d="M13.800 7v13.800M2.600 19.250l11.200 1.550 7.200-3.100" fill="none" stroke="#ef2020" stroke-width="1"/><g fill="#ef1010" stroke="#7a0000" stroke-width=".5"><circle cx="13.800" cy="7" r="1.900"/><circle cx="2.600" cy="19.250" r="1.900"/><circle cx="13.800" cy="20.800" r="1.900"/><circle cx="21" cy="17.700" r="1.900"/></g></g>
<!-- Pocket -->
<g transform="translate(228,87)"><path d="M.8 12L12.300 2.800 23 6.200V13L11.600 22.500.8 18.800z" fill="#3465a4" stroke="#0b1521" stroke-width=".9" stroke-linejoin="round"/><path d="M.8 12L12.300 2.800 23 6.200 11.600 15.700z" fill="#5d8fce" stroke="#0b1521" stroke-width=".7" stroke-linejoin="round"/><path d="M.8 12l10.800 3.700v6.800L.8 18.800z" fill="url(#gB)" stroke="#0b1521" stroke-width=".7" stroke-linejoin="round"/><path d="M6.500 9.600L12.300 5.500 18 7.200l-5.700 4.400z" fill="#ef2020" stroke="#280000" stroke-width=".7" stroke-linejoin="round"/><path d="M12.300 5.500v6.100M12.300 8.500l-5.800 1.100M12.300 8.500L18 7.200" stroke="#7a0000" stroke-width=".5" fill="none"/></g>
<!-- Hole -->
<g transform="translate(260,87)"><path d="M1 .8l7-.2 15 3.600v18.300l-7.100.3L1 19.400z" fill="#3465a4" stroke="#0b1521" stroke-width=".9" stroke-linejoin="round"/><path d="M1 .8l14.900 3.400v18.600L1 19.400z" fill="#5d8fce" stroke="#0b1521" stroke-width=".8" stroke-linejoin="round"/><path d="M15.900 4.200H23v18.300l-7.100.3z" fill="url(#gBd)" stroke="#0b1521" stroke-width=".7"/><ellipse cx="8" cy="12" rx="5.300" ry="7" fill="url(#gR)" stroke="#280000" stroke-width=".8"/><path d="M11 6.500c2.300 2 2.800 8 0 11 1-3.500 1-7.500 0-11z" fill="#fff" stroke="#280000" stroke-width=".4"/></g>
<!-- Groove -->
<g transform="translate(292,87)"><path d="M.9 19.800L22.300 2.500" stroke="#7a0000" stroke-width="2.200"/><path d="M.9 19.800L22.300 2.500" stroke="#ef2020" stroke-width="1.400"/><path d="M1 8.500l7.500-3.700c1.500-2.300 4.500-3.300 7-2.300 3.500 1.500 6.500 5 7.200 9.500l-1 1.800c-2 1-3.500 2.500-4 4.500l-6 3.700-4.700-2C6.800 17 5 13.800 2 12.500z" fill="url(#gB)" stroke="#0b1521" stroke-width=".9" stroke-linejoin="round"/><path d="M9.500 4c4 1 8 5.500 8.500 11.500 1.500-1.500 2.800-2.500 3.800-2.800C21 8 18.500 4.500 15 3c-2-.8-4.200-.2-5.500 1z" fill="url(#gR)" stroke="#280000" stroke-width=".7"/><path d="M1 8.500c5 1 9.500 5.500 10.200 11.500M4.500 6.800C9.500 8 13.500 12 14.300 18M6.500 5.800c5 1.200 9 5.200 9.800 11" fill="none" stroke="#0b1521" stroke-width=".7"/></g>
<!-- SubLoft -->
<g transform="translate(324,87)"><path d="M2.300 11.100L8.900 3.300l12.800 2.500-.3 15.950L9.200 20.300 2.300 18.500z" fill="#d80000" stroke="#280000" stroke-width=".7" stroke-linejoin="round"/><path d="M2.300 11.100L8.900 3.300l12.800 2.500L9.200 12.500z" fill="#ef2929" stroke="#280000" stroke-width=".5"/><path d="M9.200 12.500L20.500 6.600v14.300L9.200 20.300z" fill="url(#gR)" stroke="#280000" stroke-width=".5"/><path d="M8.900 3.300l12.800 2.500-.3 15.950" fill="none" stroke="#4a7fc1" stroke-width="1.800" stroke-linejoin="round"/><path d="M2.300 11.100l6.900 1.400v7.800l-6.900-1.800z" fill="#c00" stroke="#4a7fc1" stroke-width="1.800" stroke-linejoin="round"/></g>
<!-- SubSweep -->
<g transform="translate(356,87)"><path d="M.5 12.400C4.500 10 7 6.500 7.800 2.400l8.800 2.200 6.200 10c-3 4.500-8 7-14.400 7.400z" fill="url(#gR)" stroke="#280000" stroke-width=".8" stroke-linejoin="round"/><path d="M8.400 14.250C12.500 12.500 15.500 9 16.600 4.600" fill="none" stroke="#280000" stroke-width=".7"/><path d="M11 17.500l3-1M16.500 13.500l1.500-2" stroke="#ad7fa8" stroke-width="1.400" stroke-linecap="round"/><path d="M7.800 2.400l8.800 2.200 6.200 10" fill="none" stroke="#4a7fc1" stroke-width="2" stroke-linejoin="round"/><path d="M.5 12.400l7.900 1.850V22L.5 19.250z" fill="#3465a4" stroke="#4a7fc1" stroke-width="1.500" stroke-linejoin="round"/><rect x="3" y="15.300" width="3.600" height="3.600" fill="#c00" stroke="#0b1521" stroke-width=".5"/><circle cx="21.300" cy="2.300" r="1.400" fill="#3465a4" stroke="#0b1521" stroke-width=".6"/></g>
<!-- SubHelix -->
<g transform="translate(388,87)"><path d="M22.500 4L12 12.700" stroke="#7a0000" stroke-width="2.100" stroke-linecap="round"/><path d="M22.500 4L12 12.700" stroke="#e81212" stroke-width="1.400" stroke-linecap="round"/><path d="M10.300 6.400C11.500 3.600 14 1.400 16.600.800c1.200.700 1.600 2.700 1.100 4.500-.6 1.300-1.800 2-3.200 2.300z" fill="#3b6fb5" stroke="#0b1521" stroke-width=".9" stroke-linejoin="round"/><path d="M12.500 5.800c1.200-1.800 2.700-3 4-3.600" fill="none" stroke="#729fcf" stroke-width="1.200" stroke-linecap="round"/><path d="M3.800 13.800C3.300 10.500 5 7.800 8 6.600c3.500-1.300 7.500-.5 10 2 2 2 3 4.800 2.700 7.200-.4 1.600-1.700 2.500-3.300 2.300-1.700-.3-3-1.300-3.600-2.800.2-1.300 0-2.300-.6-3-.8-.9-2-.9-3 0-1.200 1-2 2.600-2 4.400.3 1.200.9 2.300 1.800 3.300 1 1.200 1.500 2.300.5 2.900-1.700-.3-3.500-1.800-4.800-4-1-1.600-1.700-3.400-1.900-5.100z" fill="#3b6fb5" stroke="#0b1521" stroke-width=".9" stroke-linejoin="round"/><path d="M5.300 13.500c-.2-2.700 1.300-4.800 3.600-5.600 2.800-.9 5.800-.2 7.700 1.700" fill="none" stroke="#729fcf" stroke-width="1.300" stroke-linecap="round"/><path d="M14.500 9.200c2.300 1.500 3.800 4 3.600 6.800M16.300 8.800c2.200 1.700 3.300 4.200 3.100 6.700" fill="none" stroke="#0b1521" stroke-width=".7"/><path d="M1.500 21.400L12.300 12.500" stroke="#7a0000" stroke-width="2.100" stroke-linecap="round"/><path d="M1.500 21.400L12.300 12.500" stroke="#e81212" stroke-width="1.400" stroke-linecap="round"/></g>
<!-- SubPrim -->
<g transform="translate(420,87)"><path d="M1.500 5.500L10.800 2.400l10 2.200.9 13.100-8.700 4.300L1.500 19.500z" fill="#e82020" stroke="#280000" stroke-width=".9" stroke-linejoin="round"/><path d="M1.500 5.500L10.800 2.400l10 2.200L13 7.500z" fill="#ef2929" stroke="#280000" stroke-width=".6"/><path d="M13 7.500l7.800-2.900.9 13.100L13 22z" fill="#c00000" stroke="#280000" stroke-width=".6"/><path d="M13 7v13.800M1.800 19.250L13 20.800l7.200-3.100" fill="none" stroke="#204a87" stroke-width="1.900"/><path d="M13 7v13.800M1.800 19.250L13 20.800l7.200-3.100" fill="none" stroke="#4a7fc1" stroke-width="1"/><g fill="#4a7fc1" stroke="#204a87" stroke-width=".5"><circle cx="13" cy="7" r="1.900"/><circle cx="1.800" cy="19.250" r="1.900"/><circle cx="13" cy="20.800" r="1.900"/><circle cx="20.200" cy="17.700" r="1.900"/></g></g>
<!-- Boolean -->
<g transform="translate(473,87)"><circle cx="16.600" cy="9.400" r="7" fill="#5d8fce" stroke="#1b3a6b" stroke-width=".8"/><circle cx="9" cy="14.500" r="7" fill="url(#gSph)" stroke="#1b3a6b" stroke-width=".8"/></g>
<!-- Fillet -->
<g transform="translate(519,87)"><path d="M.9 14.500C1.500 9 4 5 7.600 3.200L13 1.200l10.200 3.900V16L11.100 22.300.9 18.800z" fill="#3465a4" stroke="#0b1521" stroke-width=".9" stroke-linejoin="round"/><path d="M7.600 3.200L13 1.200l10.200 3.900-5.500 1.600z" fill="#5d8fce" stroke="#0b1521" stroke-width=".7" stroke-linejoin="round"/><path d="M.9 14.500C1.500 9 4 5 7.600 3.200l10.100 3.500c-3.800 1.800-6 5.500-6.600 10.900z" fill="url(#gR)" stroke="#280000" stroke-width=".7" stroke-linejoin="round"/><path d="M.9 14.500l10.200 3.100v4.700L.9 18.800z" fill="#5d8fce" stroke="#0b1521" stroke-width=".7" stroke-linejoin="round"/><path d="M2 17l8 2.500" stroke="#9cbce0" stroke-width=".8"/></g>
<!-- Chamfer -->
<g transform="translate(551,87)"><path d="M.95 14.100L8.800 3.500l4.300-2.300 10.100 3.900V16L11.900 22.300.95 18.400z" fill="#3465a4" stroke="#0b1521" stroke-width=".9" stroke-linejoin="round"/><path d="M8.800 3.500l4.300-2.300 10.100 3.900-4.700 2z" fill="#5d8fce" stroke="#0b1521" stroke-width=".7" stroke-linejoin="round"/><path d="M.95 14.100L8.800 3.500l9.700 3.600-6.600 10.500z" fill="url(#gR)" stroke="#280000" stroke-width=".7" stroke-linejoin="round"/><path d="M.95 14.100l10.950 3.500v4.700L.95 18.400z" fill="#5d8fce" stroke="#0b1521" stroke-width=".7" stroke-linejoin="round"/><path d="M2 16.600l8.500 2.800" stroke="#9cbce0" stroke-width=".8"/></g>
<!-- Draft -->
<g transform="translate(583,87)"><path d="M10.750.8L23.250 5.100v11.700L12.300 23 1.400 18 1 4.700z" fill="#5d8fce" stroke="#0b1521" stroke-width=".9" stroke-linejoin="round"/><path d="M4.800 7.500l6.500 2.300v9.700L5.500 16.800z" fill="url(#gR)"/><path d="M13.300 9.800l8.200-3v8.400l-8.200 4.400z" fill="#d40000"/><path d="M6.500 5.500l4.500-2.300 9 3-7.700 2.300z" fill="#e82020"/><path d="M1 4.700l11.300 3.700 10.950-3.300M12.300 8.400V23" fill="none" stroke="#0b1521" stroke-width=".8"/><path d="M12.300 8.400V23" stroke="#5d8fce" stroke-width="1.600"/><path d="M11.500 8.600V22.500M13.100 8.600V22.500" stroke="#0b1521" stroke-width=".5"/><path d="M7 18.500l5.300 2.300 5-2.500" fill="none" stroke="#fff" stroke-width="1" opacity=".8"/></g>
<!-- Thickness -->
<g transform="translate(615,87)"><path d="M11.600.8L22.900 4.700v11.700L13.100 23 1 18.400 3.750 3.900z" fill="#5d8fce" stroke="#0b1521" stroke-width=".9" stroke-linejoin="round"/><path d="M6.500 4l5-1.800 9.500 3.300v10L13.300 20.500 5 17.300z" fill="#e00000" stroke="#0b1521" stroke-width=".6" stroke-linejoin="round"/><path d="M11.500 2.200v11.600L5 17.300M11.500 13.800l9.500 1.700" fill="none" stroke="#280000" stroke-width=".7"/><path d="M11.500 2.200v11.600L6.500 16V4z" fill="#c00000"/><path d="M11.500 13.800l9.500 1.700-7.700 5L5 17.300z" fill="#f02a2a"/><path d="M13.100 23v-2.800l9.800-5.200" fill="none" stroke="#0b1521" stroke-width=".6"/></g>
<!-- Mirrored -->
<g transform="translate(660,87)"><path d="M1 12.900L17.800 2l5.500 2.700v18H1z" fill="url(#gB)" stroke="#0b1521" stroke-width=".9" stroke-linejoin="round"/><path d="M1 17.500l11.500 5.200M1 12.900l5 2.500" stroke="#0b1521" stroke-width=".6" fill="none"/><path d="M4.100 3.900L6.900 1.200l5.400 3.500v7.800l-4.600 3.200-3.600-3.950z" fill="#3465a4" stroke="#0b1521" stroke-width=".8" stroke-linejoin="round"/><path d="M4.100 3.900L6.900 1.200l5.400 3.500-4.300 2.700z" fill="#729fcf" stroke="#0b1521" stroke-width=".6" stroke-linejoin="round"/><path d="M8 7.400v8.300" stroke="#0b1521" stroke-width=".6"/><path d="M3 20.500l2.300-1.500M7.800 17.300l2-1.400M20.500 9.300l2-1.400" stroke="#ef1010" stroke-width="1.800"/><path d="M11.800 10v7.200c0 1.300 2.300 2.400 5.200 2.400s5.200-1.100 5.200-2.400V10z" fill="url(#gY)" stroke="#302b00" stroke-width=".8"/><path d="M11.800 10L17 7.500 22.200 10c0 1.300-2.300 2.200-5.200 2.200S11.800 11.300 11.800 10z" fill="#fce94f" stroke="#302b00" stroke-width=".7" stroke-linejoin="round"/></g>
<!-- Linear -->
<g transform="translate(692,87)"><path d="M1 12.900L17.800 2l5.500 2.700v18H1z" fill="url(#gB)" stroke="#0b1521" stroke-width=".9" stroke-linejoin="round"/><path d="M1 17.500l11.500 5.200M1 12.900l22.300 9" stroke="#0b1521" stroke-width=".6" fill="none"/><g><path d="M1.500 11l3-2.300 3.500 1.500v4l-3 2-3.500-1.500z" fill="#3465a4" stroke="#0b1521" stroke-width=".8" stroke-linejoin="round"/><path d="M1.500 11l3-2.300 3.500 1.500-3 2z" fill="#5d8fce" stroke="#0b1521" stroke-width=".5"/></g><g transform="translate(7.600,0)"><path d="M1.500 11l3-2.300 3.500 1.500v4l-3 2-3.500-1.500z" fill="#edd400" stroke="#302b00" stroke-width=".8" stroke-linejoin="round"/><path d="M1.500 11l3-2.300 3.500 1.500-3 2z" fill="#fce94f" stroke="#302b00" stroke-width=".5"/><path d="M5 12.200v4" stroke="#302b00" stroke-width=".5"/></g><g transform="translate(15.200,0)"><path d="M1.500 11l3-2.300 3.500 1.500v4l-3 2-3.500-1.500z" fill="#edd400" stroke="#302b00" stroke-width=".8" stroke-linejoin="round"/><path d="M1.500 11l3-2.300 3.500 1.500-3 2z" fill="#fce94f" stroke="#302b00" stroke-width=".5"/><path d="M5 12.200v4" stroke="#302b00" stroke-width=".5"/></g></g>
<!-- Polar -->
<g transform="translate(724,87)"><path d="M1 12.900L17.800 2l5.500 2.700v18H1z" fill="url(#gB)" stroke="#0b1521" stroke-width=".9" stroke-linejoin="round"/><path d="M1 17.500l11.500 5.200M1 12.900l5 2" stroke="#0b1521" stroke-width=".6" fill="none"/><g id="pc"><path d="M0 2.300L2.800 0l3.200 1.400v3.800L3.200 7 0 5.600z" fill="#edd400" stroke="#302b00" stroke-width=".8" stroke-linejoin="round" transform="translate(9,3.500)"/><path d="M0 2.300L2.800 0l3.200 1.400v3.800L3.200 7 0 5.600z" fill="#edd400" stroke="#302b00" stroke-width=".8" stroke-linejoin="round" transform="translate(3.500,7)"/><path d="M0 2.300L2.800 0l3.200 1.400v3.800L3.200 7 0 5.600z" fill="#edd400" stroke="#302b00" stroke-width=".8" stroke-linejoin="round" transform="translate(15.500,5.500)"/><path d="M0 2.300L2.800 0l3.200 1.400v3.800L3.200 7 0 5.600z" fill="#edd400" stroke="#302b00" stroke-width=".8" stroke-linejoin="round" transform="translate(16,10.500)"/><path d="M0 2.300L2.800 0l3.200 1.400v3.800L3.200 7 0 5.600z" fill="#edd400" stroke="#302b00" stroke-width=".8" stroke-linejoin="round" transform="translate(9.800,13)"/><path d="M0 2.300L2.800 0l3.200 1.400v3.800L3.200 7 0 5.600z" fill="#3465a4" stroke="#0b1521" stroke-width=".8" stroke-linejoin="round" transform="translate(4,12)"/></g></g>
<!-- Multi -->
<g transform="translate(756,87)"><path d="M1 12.900L17.800 2l5.500 2.700v18H1z" fill="url(#gB)" stroke="#0b1521" stroke-width=".9" stroke-linejoin="round"/><path d="M1 17.500l11.500 5.200M1 12.900l5 2" stroke="#0b1521" stroke-width=".6" fill="none"/><path d="M8.500 6L15.500 1l7.500 3v9.500L16.500 17 8.500 14z" fill="#edd400" stroke="#302b00" stroke-width=".8" stroke-linejoin="round"/><path d="M8.500 6L15.500 1l7.500 3-6.500 4.500z" fill="#fce94f" stroke="#302b00" stroke-width=".6"/><path d="M16.500 8.500L23 4v9.500L16.500 17z" fill="#c9a800" stroke="#302b00" stroke-width=".6"/><path d="M3.200 5l3-2 3.500 1.300v4L6.800 10 3.200 8.800z" fill="#edd400" stroke="#302b00" stroke-width=".8" stroke-linejoin="round"/><path d="M13.500 15l4-2.800 4.800 1.800v5.500l-4 2.300-4.800-1.800z" fill="#fce94f" stroke="#302b00" stroke-width=".8" stroke-linejoin="round"/><path d="M17.500 16.300v5.500M13.500 15l4 1.300 4.800-2.300" fill="none" stroke="#302b00" stroke-width=".6"/><path d="M6.500 15.500l3-2 3.500 1.300v4L10 20.500 6.500 19.200z" fill="#3465a4" stroke="#0b1521" stroke-width=".8" stroke-linejoin="round"/><path d="M6.500 15.500l3-2 3.500 1.300-3 1.900z" fill="#5d8fce" stroke="#0b1521" stroke-width=".5"/></g>
</svg>
<div id="left">
  <div class="abs" style="left:39px;top:3px;width:40px;height:23px;background:#e2e2e2;border:1px solid #a2a2a2;border-radius:4px 4px 0 0"></div>
  <span class="abs" style="left:44.500px;top:8px;font-size:11px;line-height:14px;color:#5a5a5a;letter-spacing:-0.12px">Taken</span>
  <div class="abs" style="left:0;top:0;width:39px;height:26px;background:#f8f8f8;border:1px solid #a2a2a2;border-bottom:none;border-radius:4px 4px 0 0"></div>
  <span class="abs" style="left:5.500px;top:6px;font-size:11px;line-height:14px;letter-spacing:-0.29px">Model</span>
  <span class="abs" style="left:198.700px;top:27px;font-size:11px;line-height:14px;letter-spacing:-0.25px">Model</span>
  <svg class="abs" style="left:418px;top:26px" width="56" height="16" viewBox="418 144 56 16"><rect x="422.500" y="147.500" width="7" height="7.500" fill="none" stroke="#555" stroke-width="1.100"/><path d="M422.500 151h7" stroke="#555" stroke-width="1.100"/><rect x="441.500" y="150.500" width="5" height="5" fill="#f0f0f0" stroke="#555" stroke-width="1.100"/><path d="M444 150.500v-2.500h5.500v5.500h-3" fill="none" stroke="#555" stroke-width="1.100"/><path d="M461 147.700l7.400 7.400M468.400 147.700l-7.400 7.400" stroke="#3a3a3a" stroke-width="1.700"/></svg>
  <!-- tree -->
  <svg class="abs" style="left:0;top:40px" width="220" height="40" viewBox="0 158 220 40">
    <path d="M6 166.300h9l-4.500 4.500z" fill="#1a1a1a"/>
    <g transform="translate(25,160)"><path d="M.8.500h7.700l3.500 3.500v11.500H.8z" fill="#fafafa" stroke="#777" stroke-width=".9"/><path d="M8.500.500v3.500H12z" fill="#ddd" stroke="#777" stroke-width=".6"/><path d="M2.800 8.200l3.400-2.500 3.300 1.200v4.600L6.300 13.800l-3.500-1.300z" fill="#3465a4" stroke="#0b1521" stroke-width=".6"/><circle cx="8" cy="6.300" r="2.200" fill="#e81818"/></g>
    <g transform="translate(45,182)"><path d="M.3 4.600C2.500 1.500 4.500.6 6 .6s3.500.9 5.700 4c-2.200 3-4.200 3.800-5.700 3.800S2.500 7.600.3 4.600z" fill="#fff" stroke="#111" stroke-width="1.100"/><circle cx="6" cy="4.300" r="2.700" fill="#111"/><circle cx="5" cy="3.300" r=".9" fill="#fff"/></g>
    <g transform="translate(63,178.500)"><path d="M.5 2.700L9 .4l7 2v9.200L8.300 14 .5 11.800z" fill="#3b6fb5" stroke="#244b80" stroke-width=".7" stroke-linejoin="round"/><path d="M.5 2.700l7.800 2.200L16 2.400M8.300 4.900V14" fill="none" stroke="#244b80" stroke-width=".6"/><path d="M.5 2.700L9 .4l7 2-7.700 2.500z" fill="#5d8fce"/><path d="M9.300 4.500l2.200 2.300 3.800-4.600" fill="none" stroke="#fff" stroke-width="1.600"/></g>
  </svg>
  <span class="abs" style="left:44.500px;top:44px;font-size:12px;line-height:14px;font-weight:bold;letter-spacing:-0.114px;white-space:nowrap">Statuslamp houder</span>
  <span class="abs" style="left:85.500px;top:62px;font-size:12px;line-height:14px;letter-spacing:-0.117px;white-space:nowrap">Buisbeugel status lamp</span>
  <div class="abs" style="left:0;top:437px;width:472px;height:421px;border:1px solid #d2d2d2;border-left-color:#dcdcdc"></div>
  <div class="abs" style="left:-1px;top:857px;width:60px;height:23px;background:#e2e2e2;border:1px solid #a8a8a8;border-radius:0 0 4px 4px"></div>
  <span class="abs" style="left:5px;top:861px;font-size:11px;line-height:14px;color:#6e6e6e;letter-spacing:-0.2px">Weergave</span>
  <div class="abs" style="left:59px;top:857px;width:58px;height:26px;background:#f8f8f8;border:1px solid #a8a8a8;border-top:none;border-radius:0 0 4px 4px"></div>
  <span class="abs" style="left:64.500px;top:863px;font-size:11px;line-height:14px;letter-spacing:-0.38px">Gegevens</span>
</div>
<div id="view">
<svg id="model" class="abs" style="left:0;top:0" width="1442" height="850" viewBox="478 118 1442 850">
<defs>
<linearGradient id="mCyl" gradientUnits="userSpaceOnUse" x1="1048.8" y1="0" x2="1310.4" y2="0">
<stop offset="0" stop-color="#2c2e31"/><stop offset=".05" stop-color="#44474b"/><stop offset=".1445" stop-color="#7b8087"/><stop offset=".1446" stop-color="#878c93"/><stop offset=".30" stop-color="#a4aab2"/><stop offset=".40" stop-color="#b7bdc6"/><stop offset=".45" stop-color="#bfc5ce"/><stop offset=".55" stop-color="#bfc5ce"/><stop offset=".585" stop-color="#b7bdc6"/><stop offset=".64" stop-color="#adb3bb"/><stop offset=".75" stop-color="#9da2aa"/><stop offset=".84" stop-color="#8f949b"/><stop offset=".92" stop-color="#7a7f85"/><stop offset=".97" stop-color="#55585c"/><stop offset="1" stop-color="#3c3f42"/>
</linearGradient>
<linearGradient id="mBore" gradientUnits="userSpaceOnUse" x1="1079" y1="0" x2="1281" y2="0">
<stop offset="0" stop-color="#4a4d50"/><stop offset=".1" stop-color="#7d8289"/><stop offset=".25" stop-color="#989da5"/><stop offset=".5" stop-color="#c2c8d1"/><stop offset=".75" stop-color="#9ba0a8"/><stop offset=".92" stop-color="#777c82"/><stop offset="1" stop-color="#4d5053"/>
</linearGradient>
<linearGradient id="mHole" x1="0" y1="0" x2="0" y2="1"><stop offset="0" stop-color="#36393c"/><stop offset=".42" stop-color="#888d94"/><stop offset=".55" stop-color="#8d9299"/><stop offset="1" stop-color="#484b4e"/></linearGradient>
<linearGradient id="mBoss" gradientUnits="userSpaceOnUse" x1="1420" y1="440" x2="1462" y2="668">
<stop offset="0" stop-color="#303336"/><stop offset=".12" stop-color="#4a4d51"/><stop offset=".3" stop-color="#6b7076"/><stop offset=".5" stop-color="#80858c"/><stop offset=".66" stop-color="#787d84"/><stop offset=".85" stop-color="#585b5f"/><stop offset="1" stop-color="#3a3d40"/>
</linearGradient>
<linearGradient id="mPocket" gradientUnits="userSpaceOnUse" x1="1340" y1="466" x2="1378" y2="664">
<stop offset="0" stop-color="#2d3033"/><stop offset=".08" stop-color="#3d4043"/><stop offset=".17" stop-color="#55595e"/><stop offset=".37" stop-color="#777c83"/><stop offset=".55" stop-color="#80858c"/><stop offset=".7" stop-color="#7f848b"/><stop offset=".83" stop-color="#666a70"/><stop offset=".93" stop-color="#4a4d51"/><stop offset="1" stop-color="#333639"/>
</linearGradient>
<linearGradient id="mTube" gradientUnits="userSpaceOnUse" x1="1390" y1="495" x2="1418" y2="620">
<stop offset="0" stop-color="#303336"/><stop offset=".5" stop-color="#80858c"/><stop offset="1" stop-color="#505357"/>
</linearGradient>
<linearGradient id="mTBore" gradientUnits="userSpaceOnUse" x1="1350" y1="520" x2="1366" y2="608">
<stop offset="0" stop-color="#2f3235"/><stop offset=".45" stop-color="#63676c"/><stop offset="1" stop-color="#8f949b"/>
</linearGradient>
<linearGradient id="mCres" x1="0" y1="0" x2="1" y2="0"><stop offset="0" stop-color="#cdd3dc"/><stop offset=".6" stop-color="#b4bac2"/><stop offset="1" stop-color="#70757b"/></linearGradient>
<clipPath id="ringClip"><path d="M1313.200 471L1300 440H1530V700H1377V679.200z"/></clipPath>
<linearGradient id="mTubeD" gradientUnits="userSpaceOnUse" x1="480" y1="190" x2="590" y2="740"><stop offset="0" stop-color="#2f3235"/><stop offset=".22" stop-color="#4d5054"/><stop offset=".55" stop-color="#80858c"/><stop offset="1" stop-color="#4d5054"/></linearGradient>
</defs>
<g stroke-linejoin="round" stroke-linecap="round">
<!-- plates top (dark) -->
<path d="M1038.2 368.3V364.4L1067 358.7 1150 370v16l-48.200-6z" fill="#2c2e30" stroke="#0e0f10" stroke-width="1.800"/>
<path d="M996.300 371.200L1024.200 366.100 1038.200 368.300 1101.800 380.300 1090 386 1078.800 389.800 1060 396 1049.100 391.800 1049.500 387.900 1060 381.800 1054.700 382.300z" fill="#2c2e30" stroke="#0e0f10" stroke-width="1.800"/>
<!-- ring top -->
<path fill-rule="evenodd" d="M1048.800 390.800A130.800 22.800 0 1 0 1310.400 390.800A130.800 22.800 0 1 0 1048.800 390.800zM1078.800 389.800A101.200 17 0 1 0 1281.200 389.800A101.200 17 0 1 0 1078.800 389.800z" fill="#2c2e30" stroke="#0e0f10" stroke-width="1.800"/>
<path d="M1038.500 364.900L1101.800 378.300V380.100L1039.500 366.600z" fill="#a0a5ac"/>
<!-- bore -->
<ellipse cx="1180" cy="389.800" rx="101.200" ry="17" fill="url(#mBore)" stroke="#0e0f10" stroke-width="1.800"/>
<path d="M1101.800 379.400h11.400v24.200q-6-1.300-11.400-3.500z" fill="#7f848b"/>
<path d="M1101.800 379.300v21.200M1113.200 377.400v26.100M1252.200 377.800v22.800" stroke="#0e0f10" stroke-width="1.700" fill="none"/>
<!-- cylinder body -->
<path d="M1048.800 390.800A130.800 22.800 0 0 0 1310.400 390.800V677.500A130.800 22 0 0 1 1048.800 677.500z" fill="url(#mCyl)" stroke="#0e0f10" stroke-width="1.800"/>
<path d="M1086.600 406.900V692.600" stroke="#0e0f10" stroke-width="1.900"/>
<!-- flange front -->
<path d="M996.300 371.200L1054.700 382.300 1060 381.800 1049.500 387.900 1049.100 391.800 1048.800 667.300 996.500 658z" fill="#81868d" stroke="#0e0f10" stroke-width="1.700"/>
<ellipse cx="1028" cy="422.700" rx="14" ry="19.600" fill="url(#mHole)" stroke="#0e0f10" stroke-width="1.800"/>
<path d="M1014.300 420.200L1041.700 415.500" stroke="#0e0f10" stroke-width="1.700"/>
<ellipse cx="1028" cy="617.300" rx="14" ry="19.600" fill="url(#mHole)" stroke="#0e0f10" stroke-width="1.800"/>
<path d="M1014.300 614.800L1041.700 610.100" stroke="#0e0f10" stroke-width="1.700"/>
</g>
<g stroke-linejoin="round" stroke-linecap="round" stroke="#0e0f10" stroke-width="1.800">
<!-- boss outer body: far ellipse + hull -->
<g transform="translate(0,1.500)"><path d="M1343.600 456L1413.300 443.200Q1428.900 439.500 1447.400 446.500 1475.300 460.500 1493.900 496.500 1509 529 1508.800 559.300 1506.700 598.800 1491.600 629 1475.300 657 1453.500 662.300L1383.800 675.100 1363.700 565.600z" fill="url(#mBoss)" stroke="none"/>
<path d="M1343.600 456L1413.300 443.200Q1428.900 439.500 1447.400 446.500 1475.300 460.500 1493.900 496.500 1509 529 1508.800 559.300 1506.700 598.800 1491.600 629 1475.300 657 1453.500 662.300L1383.800 675.100" fill="none"/></g>
<path d="M1439.400 581.400L1508.500 569.200M1402.700 665.300L1471 655.400" fill="none" stroke-width="1.600"/>
<!-- boss top dark -->
<path d="M1272 463.400Q1296 457 1310 445.800L1362 453.900 1340 475 1313.200 471z" fill="#2c2e30" stroke="none"/><path d="M1313.200 471L1272 463.400Q1296 457 1310 445.800L1362 453.900" fill="none"/>
<!-- boss front face -->
<path d="M1272 463.400L1313.200 471 1330 474 1364 568 1345 672 1321.400 660 1272 652.700z" fill="#81868d" stroke="none"/><path d="M1313.200 471L1272 463.400V652.500L1323.300 660.400" fill="none"/>
<!-- ring face -->
<ellipse cx="1363.400" cy="568" rx="74.300" ry="111.300" transform="rotate(-9 1363.400 568)" fill="#81868d" stroke="none"/><g clip-path="url(#ringClip)"><ellipse cx="1363.400" cy="568" rx="74.300" ry="111.300" transform="rotate(-9 1363.400 568)" fill="none"/></g>
<path d="M1316 650L1323.300 660.400 1335 669.200 1343.300 673.750 1357.500 679.200 1376.700 679.200 1386 676 1380 666 1340 652z" fill="#81868d" stroke="none"/><path d="M1323.300 660.400Q1333 668 1343.300 673.750 1352 678 1360 679.300L1377 679.200" fill="none"/>
<!-- pocket -->
<ellipse cx="1358.600" cy="564.800" rx="69.400" ry="98.900" transform="rotate(-9 1358.600 564.800)" fill="url(#mPocket)"/>
<g transform="translate(1280,450) scale(.232558)" style="stroke-width:7.400">
<!-- tube side -->
<path d="M330 235L520 195Q590 290 625 420 640 500 630 600 622 670 610 715L440 745z" fill="url(#mTubeD)"/>
<!-- wedges -->
<path d="M300 225Q330 140 385 90 470 130 520 195L330 235z" fill="#80858c"/>
<path d="M385 755L440 745 610 715Q580 800 520 855 440 810 385 755z" fill="#80858c"/>
<path d="M525 520L635 500M36.500 438L151 420" fill="none"/>
<!-- left strip & crescent -->
<path d="M158 540Q165 690 235 765 295 815 368 800L372 755Q300 750 240 700 205 660 195 600z" fill="#3f4245"/>
<path d="M192 640Q200 715 248 758 300 795 366 788L372 755Q300 750 240 700 210 665 192 640z" fill="url(#mCres)"/>
</g>
<!-- tube annulus -->
<ellipse cx="1358.500" cy="563.700" rx="42.700" ry="60.200" transform="rotate(-11 1358.500 563.700)" fill="#81868d"/>
<ellipse cx="1358.200" cy="564" rx="31.100" ry="44.600" transform="rotate(-11 1358.200 564)" fill="url(#mTBore)"/>
<g transform="translate(1280,450) scale(.232558)" style="stroke-width:7.400">
<path d="M392 332Q335 470 442 622Q478 560 470 470 455 380 392 332z" fill="#7d8289"/>
<path d="M407 348Q358 470 455 602" fill="none"/>
<ellipse cx="452" cy="462" rx="13" ry="53" transform="rotate(-11 452 462)" fill="#9499a0"/>
<path d="M200 470L362 440" fill="none"/>
</g>
</g>

</svg>
<svg class="abs" style="left:1292px;top:-3px" width="150" height="150" viewBox="0 0 1032 1032" font-family="Liberation Sans, sans-serif">
<g fill="#e3eefb" stroke="#5f6873" stroke-width="5" stroke-linejoin="round">
<path d="M535 62L455 155H618z"/><path d="M455 877H618L535 968z"/><path d="M83 515L177 435V597z"/><path d="M990 515L897 435V597z"/>
<circle cx="930" cy="120" r="46"/>
<path d="M410 112L422 160Q330 190 268 252L292 270 195 300 213 195 238 222Q310 150 410 112z"/>
<path d="M664 112L652 160Q744 190 806 252L782 270 879 300 861 195 836 222Q764 150 664 112z"/>
<path d="M845 770L915 797V878L845 905 775 878V797z"/>
<path d="M775 797L845 825 915 797M845 825V905" fill="none" stroke="#2a2e33" stroke-width="5"/>
<path d="M345 290L480 270H580L732 292 808 400V632L765 692 730 740 580 757H490L345 740 310 690 265 632V400z"/>
<path d="M265 400L300 370 462 395 497 450V665L462 715 310 690 265 632M300 370L345 290M310 318L490 340 580 340 740 318M462 395L490 340M580 340L610 395 575 450V665L610 715 765 690M610 395L760 368 808 400M760 368L735 295M497 450H575M497 665H575M462 715L490 757M610 715L580 757M345 740L310 690M330 700L470 735M740 700L600 735" fill="none" stroke-width="4"/>
<path d="M265 400V632M808 400V632" fill="none" stroke="#2a2e33" stroke-width="5"/>
</g>
<path d="M430 285L640 322" stroke="#b8bec6" stroke-width="4"/>
<text transform="translate(383 572) scale(-1 1)" text-anchor="middle" font-size="44" font-weight="bold" fill="#a9b1bb">BODEM</text>
<text transform="translate(672 542) rotate(90)" text-anchor="middle" font-size="54" font-weight="bold" fill="#a9b1bb">LINKS</text>
<path d="M537 805L287 765" stroke="#ff5050" stroke-width="9" stroke-linecap="round"/>
<path d="M537 805L787 765" stroke="#5050ff" stroke-width="9" stroke-linecap="round"/>
<path d="M537 465V805" stroke="#30f030" stroke-width="11" stroke-linecap="round"/>
</svg>
<svg class="abs" style="left:1362px;top:752px" width="80" height="70" viewBox="0 0 1179 1032" font-family="Liberation Sans, sans-serif" font-weight="bold" font-size="140">
<text x="610" y="350" text-anchor="middle">Y</text><text x="345" y="765" text-anchor="middle">X</text><text x="862" y="765" text-anchor="middle">Z</text>
<path d="M553 820L300 772" stroke="#7a1c1c" stroke-width="18"/><path d="M320 775L365 755 410 790 365 822z" fill="#7a1c1c"/><path d="M470 790h60v30h-60z" fill="#7a1c1c"/>
<path d="M553 820L805 772" stroke="#1c1c86" stroke-width="18"/><path d="M695 785L740 752 785 775 740 822z" fill="#1c1c86"/><path d="M575 795h50v26h-50z" fill="#1c1c86"/>
<path d="M553 370V820" stroke="#1d7a1d" stroke-width="18"/><path d="M530 430h46v60h14v38h-74v-38h14z" fill="#1d7a1d"/>
</svg>

</div>
<div id="viewtabs">
  <div class="abs" style="left:0;top:0;width:90px;height:29.500px;background:#e3e3e3;border:1px solid #b4b4b4;border-radius:0 0 4px 4px"></div>
  <svg class="abs" style="left:2px;top:2px" width="26.400" height="26.400" viewBox="0 0 768 768"><path d="M100 170L190 95H545V185L450 258V195H195V510L268 515 200 600H100z" fill="url(#gLogo)"/><path d="M195 195H450V258H290V520L195 512z" fill="#fff"/><path d="M290 262L450 256 545 190V275L485 330 545 400 500 455 440 440 445 530 400 575 335 540 290 605H215L290 515V440H340V335H290z" fill="#2f86dd"/></svg>
  <span class="abs" style="left:31px;top:8px;font-size:11px;line-height:14px;color:#666;letter-spacing:0.05px">Start</span>
  <svg class="abs" style="left:68px;top:11px" width="13" height="12" viewBox="0 0 13 12"><path d="M1 1l10.500 10M11.500 1L1 11" stroke="#5a5a5a" stroke-width="2.200"/></svg>
  <div class="abs" style="left:90px;top:0;width:175px;height:32.500px;background:#f8f8f8;border:1px solid #b4b4b4;border-top:none;border-radius:0 0 4px 4px"></div>
  <svg class="abs" style="left:97px;top:8px" width="13" height="17" viewBox="0 0 13 17"><path d="M.8.500h7.700l3.500 3.500v12H.8z" fill="#fafafa" stroke="#777" stroke-width=".9"/><path d="M8.500.500v3.500H12z" fill="#ddd" stroke="#777" stroke-width=".6"/><path d="M2.800 8.700l3.400-2.500 3.300 1.200V12L6.300 14.300l-3.500-1.300z" fill="#3465a4" stroke="#0b1521" stroke-width=".6"/><circle cx="8" cy="6.600" r="2.200" fill="#e81818"/></svg>
  <span class="abs" style="left:121.500px;top:10px;font-size:11px;line-height:14px;letter-spacing:-0.03px;white-space:nowrap">Statuslamp houder : 1</span>
  <svg class="abs" style="left:243px;top:11px" width="13" height="12" viewBox="0 0 13 12"><path d="M1 1l10.500 10M11.500 1L1 11" stroke="#4a4a4a" stroke-width="2.200"/></svg>
</div>
<div id="status"><div class="msg">Geef een geselecteerde schets dikte</div>
  <div class="abs" style="left:1582px;top:4px;width:90px;height:26px;border:1px solid #b4b4b4;border-radius:3px;background:linear-gradient(#fefefe,#f2f2f2)"></div>
  <div class="abs" style="left:1584px;top:10px;width:14px;height:14px;background:linear-gradient(135deg,#4a7fc1,#2f62a8)"></div>
  <div class="abs" style="left:1678px;top:4px;width:90px;height:26px;border:1px solid #b4b4b4;border-radius:3px;background:linear-gradient(#fefefe,#f2f2f2)"></div>
  <svg class="abs" style="left:1701px;top:10px" width="12" height="15" viewBox="0 0 12 15"><rect x="2" y="1" width="8" height="12.500" rx="4" fill="#fff" stroke="#2a2a2a" stroke-width="1.600"/><path d="M6 3v3" stroke="#2a2a2a" stroke-width="1.300"/></svg>
  <span class="abs" style="left:1716.500px;top:9.700px;font-size:11px;line-height:14px;letter-spacing:-0.9px">CAD</span>
  <div class="abs" style="left:1774px;top:5px;width:145px;height:24px;border:1px solid #b4b4b4;border-radius:3px;background:linear-gradient(#fefefe,#f2f2f2)"></div>
  <span class="abs" style="left:1779px;top:9.700px;font-size:11px;line-height:14px;letter-spacing:0.05px;white-space:nowrap">248,05 mm x 146,21 mm</span>
  <svg class="abs" style="left:1655px;top:14px" width="265" height="8" viewBox="1655 1014 265 8"><g fill="#555"><path d="M1661 1017.300h7.400l-3.700 3.700z"/><path d="M1757 1017.300h7.400l-3.700 3.700z"/><path d="M1908.500 1017.300h7.400l-3.700 3.700z"/></g></svg>
</div>
</body>
</html>
